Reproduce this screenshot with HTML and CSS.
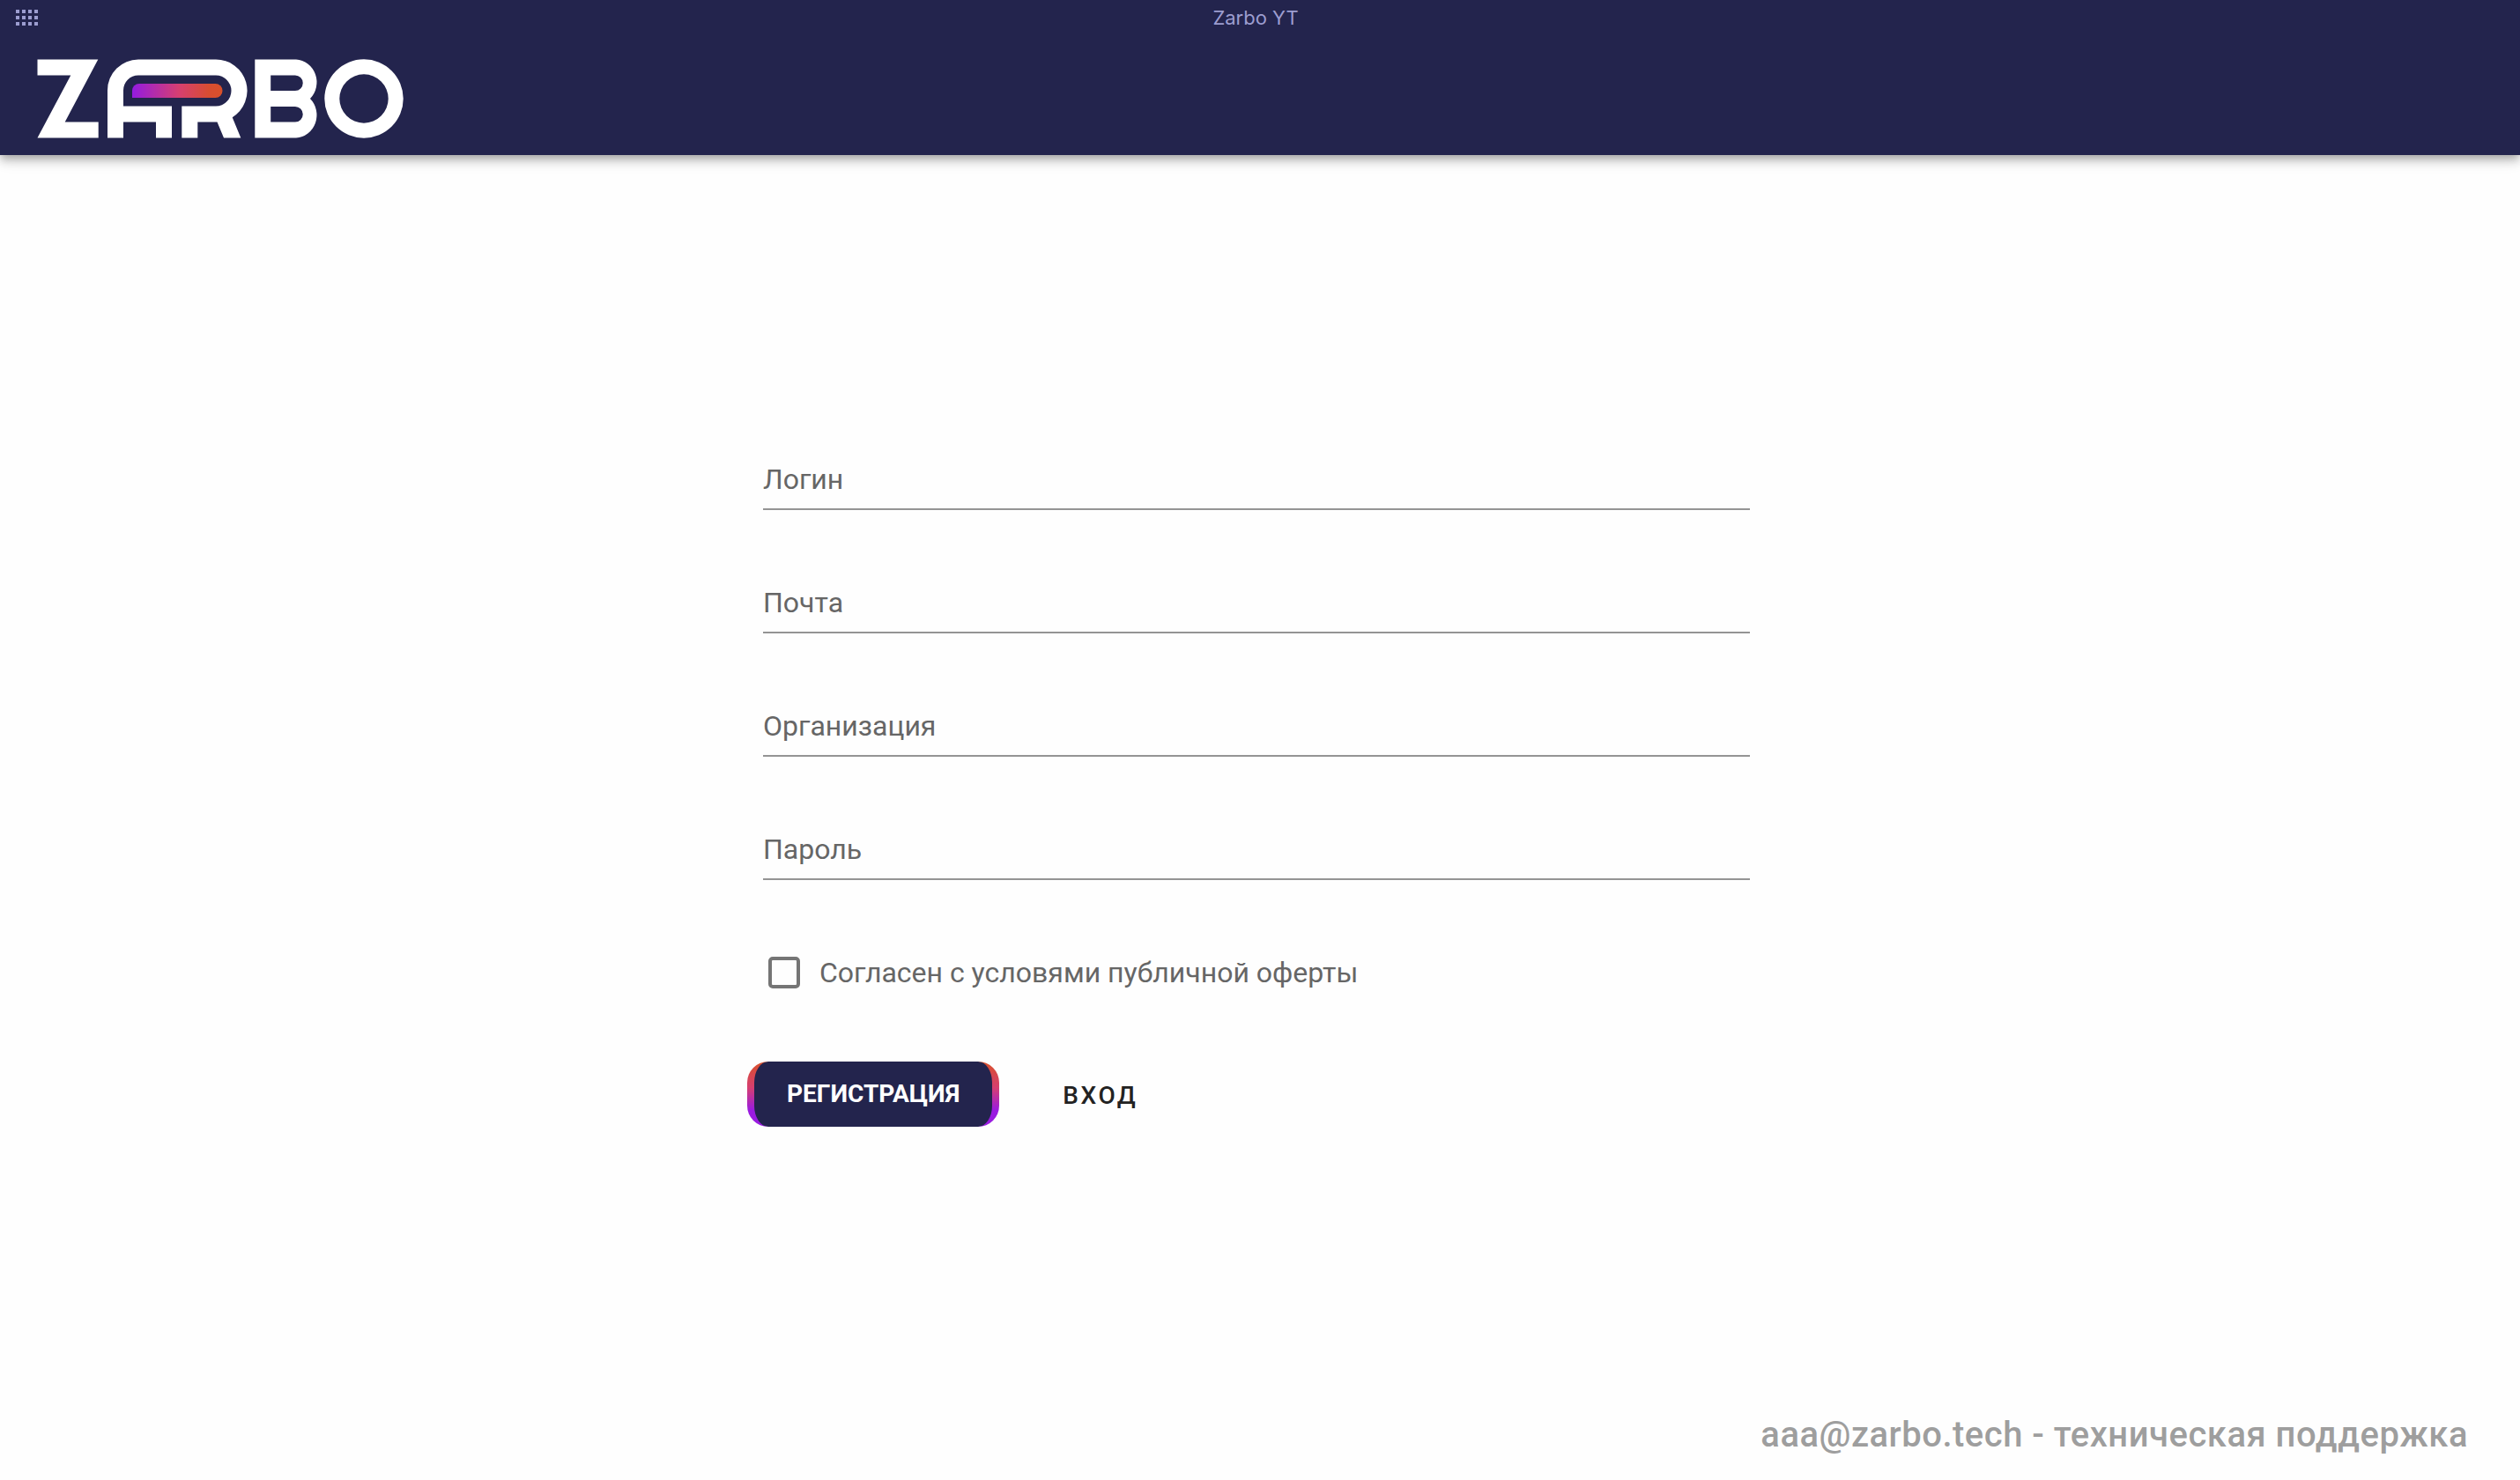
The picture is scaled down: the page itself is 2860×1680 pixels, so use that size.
FILE: index.html
```html
<!DOCTYPE html>
<html lang="ru">
<head>
<meta charset="utf-8">
<title>Zarbo YT</title>
<link rel="stylesheet" href="styles.css">
</head>
<body>
<header class="app-header">
  <div class="title-bar">
    <svg class="drag-dots" width="25" height="18" viewBox="0 0 25 18" aria-hidden="true">
      <path d="M0 0h4v4H0zM7 0h4v4H7zM14 0h4v4h-4zM21 0h4v4h-4zM0 7h4v4H0zM7 7h4v4H7zM14 7h4v4h-4zM21 7h4v4h-4zM0 14h4v4H0zM7 14h4v4H7zM14 14h4v4h-4zM21 14h4v4h-4z"/>
    </svg>
    <span class="window-title">Zarbo YT</span>
  </div>
  <svg class="logo" width="416" height="90" viewBox="42 67 416 90" role="img" aria-label="Zarbo">
    <defs>
      <linearGradient id="pill" x1="0" y1="0" x2="1" y2="0">
        <stop offset="0" stop-color="#941be0"/>
        <stop offset=".52" stop-color="#d63f70"/>
        <stop offset=".85" stop-color="#d74d31"/>
        <stop offset="1" stop-color="#d8502a"/>
      </linearGradient>
    </defs>
    <g fill="#fff">
      <path d="M42.5 67.5H111.3L73.7 138.5H111.7V156.5H42.5L80.3 85.5H42.5Z"/>
      <path d="M122 156.5V102.5A35 35 0 0 1 157 67.5H245A35.5 35.5 0 0 1 263.7 133.2L273.3 156.5H254L246.5 138.5H224.3V156.5H206.3V120.5H245A17.5 17.5 0 0 0 245 85.5H157A17 17 0 0 0 140 102.5V120.5H195V156.5H177V138.5H140V156.5Z"/>
      <path fill-rule="evenodd" d="M289.3 67.5H336A25 26 0 0 1 352 112A25 26 0 0 1 336 156.5H289.3ZM307.2 85.5V103H335A8.75 8.75 0 0 0 335 85.5ZM307.2 121V138.5H335A8.75 8.75 0 0 0 335 121Z"/>
      <path fill-rule="evenodd" d="M368.3 112A44.7 44.7 0 0 1 457.7 112A44.7 44.7 0 0 1 368.3 112ZM385.3 112A27.7 27.7 0 0 0 440.7 112A27.7 27.7 0 0 0 385.3 112Z"/>
    </g>
    <path fill="url(#pill)" d="M150 111V103A8 8 0 0 1 158 95H244.5A8 8 0 0 1 244.5 111Z"/>
  </svg>
</header>
<main class="content">
  <form class="signup">
    <div class="field">
      <input id="login" type="text" placeholder=" " autocomplete="username">
      <label for="login">Логин</label>
    </div>
    <div class="field">
      <input id="email" type="email" placeholder=" " autocomplete="email">
      <label for="email">Почта</label>
    </div>
    <div class="field">
      <input id="company" type="text" placeholder=" " autocomplete="organization">
      <label for="company">Организация</label>
    </div>
    <div class="field">
      <input id="password" type="password" placeholder=" " autocomplete="new-password">
      <label for="password">Пароль</label>
    </div>
    <div class="consent">
      <input id="offer" type="checkbox">
      <label for="offer">Согласен с условями публичной оферты</label>
    </div>
    <div class="actions">
      <button class="btn btn-primary" type="submit">Регистрация</button>
      <button class="btn btn-text" type="button">Вход</button>
    </div>
  </form>
</main>
<footer class="support">aaa@zarbo.tech - техническая поддержка</footer>
</body>
</html>
```
FILE: styles.css
```css
* {
  box-sizing: border-box;
}

body {
  margin: 0;
  min-height: 100vh;
  display: flex;
  flex-direction: column;
  background: #fefefe;
  color: #666;
  font-family: Roboto, "Liberation Sans", sans-serif;
  font-size: 32px;
  line-height: 40px;
}

.app-header {
  height: 176px;
  background: #23244d;
  box-shadow: 0 4px 8px -2px rgba(0, 0, 0, .2), 0 8px 10px 0 rgba(0, 0, 0, .14), 0 2px 20px 0 rgba(0, 0, 0, .12);
}

.title-bar {
  display: grid;
  grid-template-columns: 1fr auto 1fr;
  align-items: center;
  height: 40px;
  padding: 0 28px 0 18px;
}

.drag-dots {
  fill: #9c9dd0;
}

.window-title {
  font-family: Inter, sans-serif;
  font-size: 22px;
  color: #9c9dd0;
}

.logo {
  display: block;
  margin: 27px 0 0 42px;
}

.content {
  flex: 1;
  padding: 336px 8px 0 0;
}

.signup {
  width: 1120px;
  max-width: 90%;
  margin: 0 auto;
}

.field {
  display: grid;
  margin-bottom: 73px;
}

.field input,
.field label {
  grid-area: 1 / 1;
}

.field input {
  width: 100%;
  height: 67px;
  padding: 0;
  border: 0;
  border-bottom: 2px solid #949494;
  outline: 0;
  background: none;
  color: #222;
  font: inherit;
}

.field label {
  padding-top: 12px;
  pointer-events: none;
}

.field input:not(:placeholder-shown) + label {
  visibility: hidden;
}

.consent {
  display: flex;
  align-items: center;
  gap: 22px;
  padding: 12px 6px 0;
}

.consent input {
  appearance: none;
  width: 36px;
  height: 36px;
  margin: 0;
  border: 4px solid #757575;
  border-radius: 5px;
}

.consent input:checked {
  background: #757575;
}

.actions {
  display: flex;
  gap: 40px;
  margin: 81px 0 0 -18px;
}

.btn {
  height: 74px;
  font: 500 28px/40px Roboto, sans-serif;
  text-transform: uppercase;
  cursor: pointer;
}

.btn-primary {
  padding: 0 37px;
  border: solid transparent;
  border-width: 0 8px;
  border-radius: 24px;
  background:
    linear-gradient(#23244d, #23244d) padding-box,
    linear-gradient(#d9502a, #d63f70 40%, #9a1be0 75%, #9a1be0) border-box;
  color: #fff;
  font-weight: 700;
}

.btn-text {
  padding: 3px 32px 0;
  border: 0;
  background: none;
  color: #222;
  letter-spacing: .09em;
}

.support {
  padding: 0 59px 31px;
  color: #9e9e9e;
  font-size: 40px;
  font-weight: 500;
  letter-spacing: .0125em;
  text-align: right;
}
```
